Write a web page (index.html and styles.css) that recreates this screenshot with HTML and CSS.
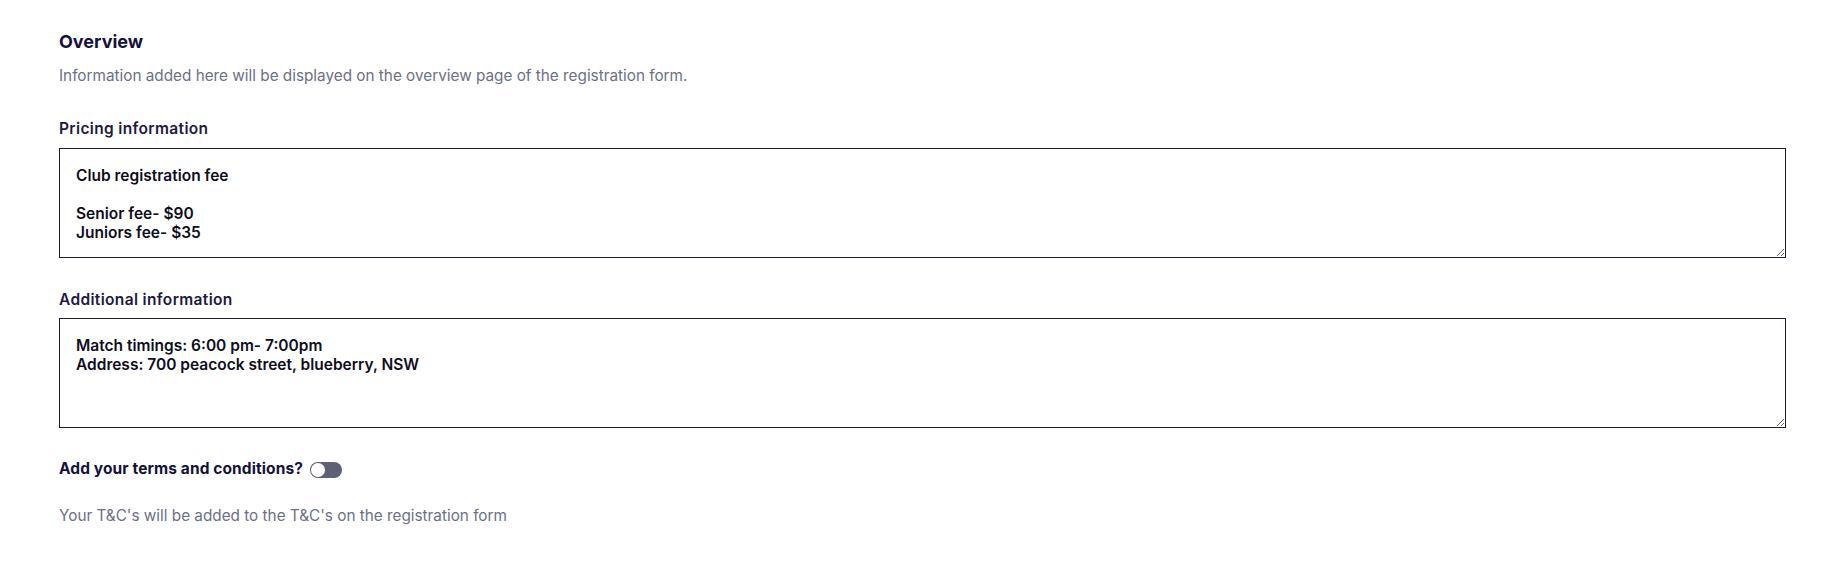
FILE: index.html
```html
<!DOCTYPE html>
<html lang="en">
<head>
  <meta charset="UTF-8">
  <meta name="viewport" content="width=device-width, initial-scale=1.0">
  <title>Overview</title>
  <link rel="stylesheet" href="styles.css">
</head>
<body>
  <section class="overview">
    <h2 class="overview-title">Overview</h2>
    <p class="overview-desc">Information added here will be displayed on the overview page of the registration form.</p>

    <div class="field">
      <label class="field-label" for="pricing">Pricing information</label>
      <textarea id="pricing" class="field-input">Club registration fee

Senior fee- $90
Juniors fee- $35</textarea>
    </div>

    <div class="field">
      <label class="field-label" for="additional">Additional information</label>
      <textarea id="additional" class="field-input">Match timings: 6:00 pm- 7:00pm
Address: 700 peacock street, blueberry, NSW</textarea>
    </div>

    <div class="terms-row">
      <span class="terms-label">Add your terms and conditions?</span>
      <span class="toggle" role="switch" aria-checked="false"><span class="toggle-knob"></span></span>
    </div>
    <p class="terms-note">Your T&amp;C's will be added to the T&amp;C's on the registration form</p>
  </section>
</body>
</html>
```
FILE: styles.css
```css
body {
  margin: 0;
  background: #ffffff;
  font-family: 'Inter', 'Noto Sans', sans-serif;
  color: #17143a;
}

.overview {
  padding: 30px 50px 0 59px;
}

.overview-title {
  margin: 0;
  font-size: 18px;
  line-height: 24px;
  font-weight: 700;
  color: #14113a;
}

.overview-desc {
  margin: 12px 0 0;
  font-size: 15.3px;
  line-height: 20px;
  color: #6c7087;
}

.field {
  display: flex;
  flex-direction: column;
  gap: 9px;
  margin-top: 33px;
}

.field + .field {
  margin-top: 32px;
  gap: 8px;
}

.field-label {
  font-size: 15.5px;
  line-height: 20px;
  font-weight: 600;
  letter-spacing: 0.35px;
  color: #1d1a3d;
}

.field-input {
  display: block;
  box-sizing: border-box;
  width: 100%;
  height: 110px;
  margin: 0;
  padding: 17px 16px 15px;
  border: 1px solid #1c1836;
  border-radius: 0;
  font-family: 'Inter', 'Noto Sans', sans-serif;
  font-size: 15.5px;
  line-height: 19px;
  font-weight: 600;
  color: #0e0d1c;
  background: #ffffff;
  resize: vertical;
  outline: none;
}

.terms-row {
  display: flex;
  align-items: center;
  gap: 7px;
  margin-top: 31px;
  height: 20px;
}

.terms-label {
  font-size: 15.5px;
  line-height: 20px;
  font-weight: 700;
  letter-spacing: 0.1px;
  color: #14113a;
}

.toggle {
  position: relative;
  display: inline-block;
  width: 32px;
  height: 16px;
  margin-top: 2px;
  border-radius: 8px;
  background: #5e6073;
}

.toggle-knob {
  position: absolute;
  top: 1px;
  left: 1px;
  width: 14px;
  height: 14px;
  border-radius: 50%;
  background: #ffffff;
}

.terms-note {
  margin: 27px 0 0;
  font-size: 15.3px;
  line-height: 20px;
  color: #6c7087;
}
```
